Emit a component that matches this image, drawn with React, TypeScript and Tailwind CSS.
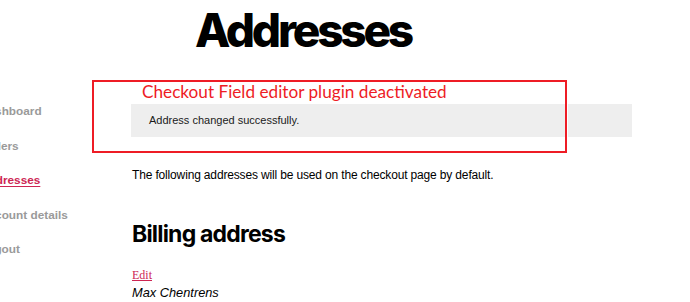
import React from "react";

export default function App() {
  const navItems = [
    { label: "Dashboard", active: false },
    { label: "Orders", active: false },
    { label: "Addresses", active: true },
    { label: "Account details", active: false },
    { label: "Logout", active: false },
  ];
  return (
    <div className="relative w-[690px] h-[302px] overflow-hidden bg-white">
      <h1 className="pl-[195px] pt-[7px] text-[46px] leading-[46px] font-extrabold tracking-[-0.07em] text-black [font-family:Inter,sans-serif]">
        Addresses
      </h1>
      <div className="flex items-start">
        <nav className="-ml-[20px] w-[151px] shrink-0 pt-[41px] [font-family:'Liberation_Sans',Arial,sans-serif]">
          <ul>
            {navItems.map((it) => (
              <li
                key={it.label}
                className={
                  "text-[11.8px] leading-[34.5px] font-bold whitespace-nowrap " +
                  (it.active ? "text-[#cd2653] underline underline-offset-[2px]" : "text-[#9a9a9a]")
                }
              >
                {it.label}
              </li>
            ))}
          </ul>
        </nav>
        <main className="pt-[51px] [font-family:'Liberation_Sans',Arial,sans-serif]">
          <div className="flex h-[33px] w-[501px] items-center bg-[#eeeeee] pl-[18px] text-[11px] leading-none text-[#1a1a1a]">
            Address changed successfully.
          </div>
          <p className="mt-[28px] pl-[1px] text-[12px] leading-[20px] tracking-[-0.013em] text-black whitespace-nowrap">
            The following addresses will be used on the checkout page by default.
          </p>
          <h2 className="mt-[34.5px] pl-[1px] text-[23px] leading-[28px] font-bold tracking-[-0.035em] text-black [font-family:Inter,sans-serif]">
            Billing address
          </h2>
          <a className="mt-[20px] block pl-[1px] text-[12px] leading-[14px] text-[#cd2653] underline [font-family:'Liberation_Serif',serif]">
            Edit
          </a>
          <p className="mt-[3px] pl-[1px] text-[12.8px] leading-[16px] italic text-black">
            Max Chentrens
          </p>
        </main>
      </div>
      <div className="absolute left-[92px] top-[80px] h-[73px] w-[475px] border-2 border-[#ee1c25] shadow-[1px_0_0_#fff]">
        <div className="pl-[48px] text-[17.2px] leading-[20px] text-[#ee1c25] [font-family:Lato,sans-serif]">
          Checkout Field editor plugin deactivated
        </div>
      </div>
    </div>
  );
}
